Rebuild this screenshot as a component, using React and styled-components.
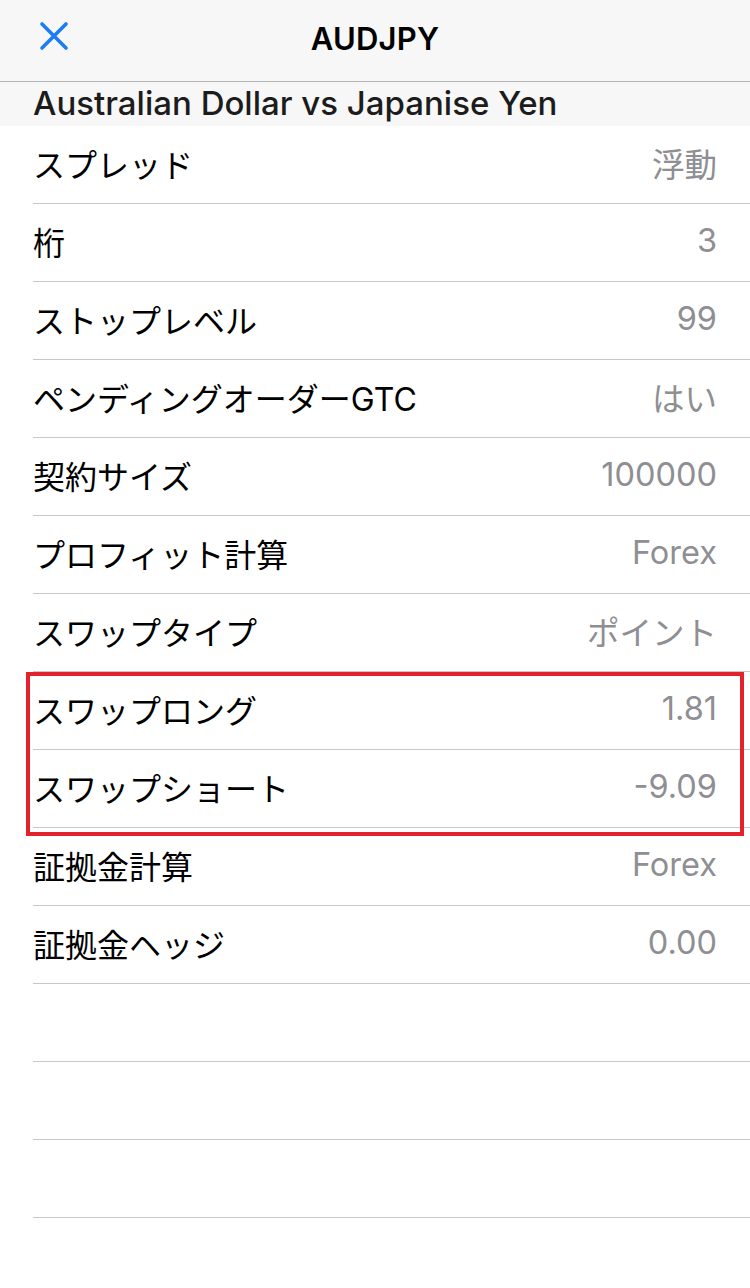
import React from "react";
import styled, { createGlobalStyle } from "styled-components";

const Global = createGlobalStyle`
  html, body { margin: 0; padding: 0; background: #ffffff; }
  body { font-family: Inter, "Noto Sans CJK JP", sans-serif; -webkit-font-smoothing: antialiased; }
`;

const Page = styled.div`
  width: 750px;
  min-height: 1288px;
  background: #ffffff;
  overflow: hidden;
`;

const NavBar = styled.header`
  position: relative;
  height: 82px;
  background: #f7f7f7;
  border-bottom: 1px solid #b4b4b4;
  box-sizing: border-box;
  display: flex;
  align-items: center;
  justify-content: center;
`;

const CloseButton = styled.button`
  position: absolute;
  left: 36px;
  top: 18px;
  width: 36px;
  height: 36px;
  padding: 0;
  border: 0;
  background: transparent;
  display: flex;
  align-items: center;
  justify-content: center;
`;

const Title = styled.h1`
  margin: 0 0 4px;
  font-family: Inter, "Noto Sans CJK JP", sans-serif;
  font-size: 31px;
  font-weight: 600;
  color: #000;
  letter-spacing: 0.2px;
`;

const SubHeader = styled.div`
  height: 44px;
  background: #f7f7f7;
  padding-left: 33px;
  padding-bottom: 2px;
  display: flex;
  align-items: center;
  font-family: Inter, "Noto Sans CJK JP", sans-serif;
  font-size: 33px;
  font-weight: 500;
  color: #1c1c1c;
  box-sizing: border-box;
`;

const List = styled.div`
  display: flex;
  flex-direction: column;
`;

const Row = styled.div`
  height: 78px;
  margin-left: 33px;
  padding-right: 33px;
  padding-bottom: 4px;
  border-bottom: 1px solid #c8c7cc;
  box-sizing: border-box;
  display: flex;
  align-items: center;
  justify-content: space-between;
`;

const Label = styled.span`
  font-family: Inter, "Noto Sans CJK JP", sans-serif;
  font-size: 32px;
  color: #000;
`;

const Value = styled.span`
  font-family: Inter, "Noto Sans CJK JP", sans-serif;
  font-size: 32.5px;
  color: #8e8e93;
`;

const Highlight = styled.div`
  position: relative;
  &::after {
    content: "";
    position: absolute;
    left: 26px;
    right: 6px;
    top: 0;
    bottom: -8px;
    border: 4px solid #e3222c;
    pointer-events: none;
  }
`;

const rows = [
  ["スプレッド", "浮動"],
  ["桁", "3"],
  ["ストップレベル", "99"],
  ["ペンディングオーダーGTC", "はい"],
  ["契約サイズ", "100000"],
  ["プロフィット計算", "Forex"],
  ["スワップタイプ", "ポイント"],
];

const highlighted = [
  ["スワップロング", "1.81"],
  ["スワップショート", "-9.09"],
];

const after = [
  ["証拠金計算", "Forex"],
  ["証拠金ヘッジ", "0.00"],
  ["", ""],
  ["", ""],
  ["", ""],
];

const Item = ({ label, value }) => (
  <Row>
    <Label>{label}</Label>
    <Value>{value}</Value>
  </Row>
);

export default function App() {
  return (
    <Page>
      <Global />
      <NavBar>
        <CloseButton aria-label="close">
          <svg width="30" height="30" viewBox="0 0 30 30">
            <path d="M3 3 L27 27 M27 3 L3 27" stroke="#1b7cf3" strokeWidth="3.6" strokeLinecap="round" fill="none" />
          </svg>
        </CloseButton>
        <Title>AUDJPY</Title>
      </NavBar>
      <SubHeader>Australian Dollar vs Japanise Yen</SubHeader>
      <List>
        {rows.map(([l, v], i) => (
          <Item key={"a" + i} label={l} value={v} />
        ))}
        <Highlight>
          {highlighted.map(([l, v], i) => (
            <Item key={"h" + i} label={l} value={v} />
          ))}
        </Highlight>
        {after.map(([l, v], i) => (
          <Item key={"b" + i} label={l} value={v} />
        ))}
      </List>
    </Page>
  );
}
